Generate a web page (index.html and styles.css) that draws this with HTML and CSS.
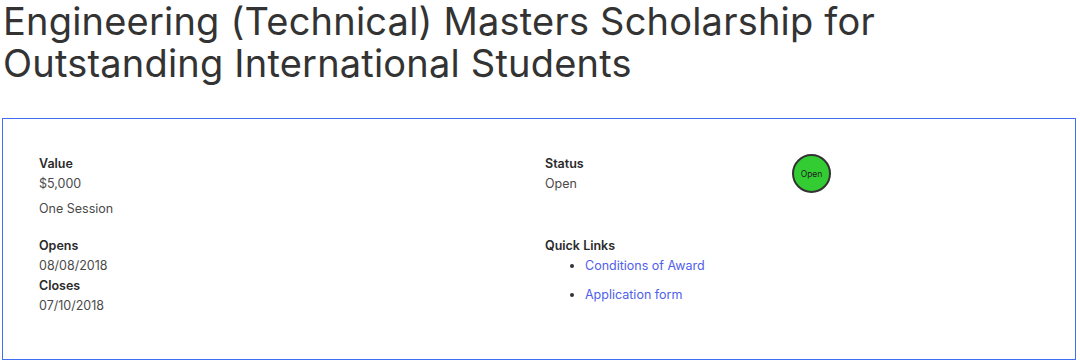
FILE: index.html
```html
<!DOCTYPE html>
<html lang="en">
<head>
<meta charset="utf-8">
<title>Scholarship</title>
<link rel="stylesheet" href="styles.css">
</head>
<body>
<main class="page">
  <h1 class="title">Engineering (Technical) Masters Scholarship for Outstanding International Students</h1>
  <section class="card">
    <div class="cell">
      <div class="label">Value</div>
      <div class="value">$5,000</div>
      <div class="value session">One Session</div>
    </div>
    <div class="cell">
      <div class="label">Status</div>
      <div class="value">Open</div>
    </div>
    <div class="cell badge-cell">
      <span class="badge">Open</span>
    </div>
    <div class="cell">
      <div class="label">Opens</div>
      <div class="value">08/08/2018</div>
      <div class="label">Closes</div>
      <div class="value">07/10/2018</div>
    </div>
    <div class="cell span2">
      <div class="label">Quick Links</div>
      <ul class="links">
        <li><a href="#">Conditions of Award</a></li>
        <li><a href="#">Application form</a></li>
      </ul>
    </div>
  </section>
</main>
</body>
</html>
```
FILE: styles.css
```css
html, body {
  margin: 0;
  padding: 0;
  background: #ffffff;
}
body {
  font-family: Inter, "Liberation Sans", sans-serif;
  color: #333333;
}
.page {
  padding: 0 4px 0 2px;
}
.title {
  margin: 0;
  padding-left: 1px;
  font-size: 38px;
  line-height: 42px;
  font-weight: 400;
  color: #333333;
  letter-spacing: 0.2px;
  max-width: 900px;
}
.card {
  margin-top: 34px;
  border: 1px solid #3f6ff0;
  height: 242px;
  box-sizing: border-box;
  padding: 35px 36px 0 36px;
  display: grid;
  grid-template-columns: 506px 247px 1fr;
  grid-template-rows: 82px auto;
  font-size: 12.5px;
}
.cell {
  display: flex;
  flex-direction: column;
}
.span2 {
  grid-column: 2 / 4;
}
.label {
  font-weight: 600;
  color: #2a2a2a;
  line-height: 20px;
}
.value {
  color: #4a4a4a;
  line-height: 20px;
}
.session {
  margin-top: 5px;
}
.badge-cell {
  padding-top: 0;
}
.badge {
  width: 35px;
  height: 35px;
  border: 2px solid #333333;
  border-radius: 50%;
  background: #33cc33;
  display: flex;
  align-items: center;
  justify-content: center;
  font-size: 8.5px;
  color: #222222;
}
.links {
  margin: 0;
  padding-left: 40px;
  line-height: 20px;
}
.links li {
  margin-bottom: 9px;
}
.links a {
  color: #5060ea;
  text-decoration: none;
}
```
